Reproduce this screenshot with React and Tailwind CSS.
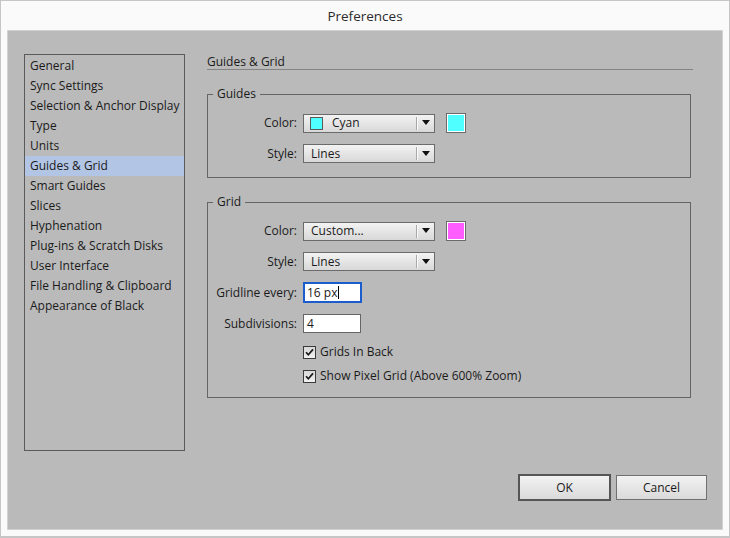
import React from "react";

const FONT = { fontFamily: '"Open Sans", "Noto Sans", sans-serif' };

const CATEGORIES = [
  "General",
  "Sync Settings",
  "Selection & Anchor Display",
  "Type",
  "Units",
  "Guides & Grid",
  "Smart Guides",
  "Slices",
  "Hyphenation",
  "Plug-ins & Scratch Disks",
  "User Interface",
  "File Handling & Clipboard",
  "Appearance of Black",
];

function Arrow() {
  return (
    <svg width="8" height="6" viewBox="0 0 8 6">
      <polygon points="0,0 8,0 4,5" fill="#111" />
    </svg>
  );
}

function Select({ label, swatch }) {
  return (
    <div className="flex h-[19px] w-[132px] items-stretch border border-[#6b6b6b] bg-gradient-to-b from-[#f3f3f3] to-[#d8d8d8]">
      <div className="flex flex-1 items-center pl-[6px]">
        {swatch && (
          <span
            className="mr-[9px] h-[13px] w-[13px] border border-[#5a5a5a]"
            style={{ backgroundColor: swatch }}
          />
        )}
        <span className={swatch ? "" : "pl-[1px]"}>{label}</span>
      </div>
      <div className="my-[2px] w-px bg-[#a8a8a8]" />
      <div className="my-[2px] w-px bg-[#fbfbfb]" />
      <div className="flex w-[16px] items-center justify-center pr-[1px]">
        <Arrow />
      </div>
    </div>
  );
}

function Swatch({ color }) {
  return (
    <div className="ml-[11px] h-[20px] w-[20px] border border-[#6b6b6b]">
      <div
        className="h-full w-full border border-white"
        style={{ backgroundColor: color }}
      />
    </div>
  );
}

function Row({ label, children, className = "" }) {
  return (
    <div className={"flex items-center " + className}>
      <div className="w-[90px] pr-[1px] text-right">{label}</div>
      <div className="ml-[5px] flex items-center">{children}</div>
    </div>
  );
}

function Check({ label, className = "" }) {
  return (
    <div className={"flex h-[16px] items-center pl-[95px] " + className}>
      <svg width="13" height="13" viewBox="0 0 13 13">
        <defs>
          <linearGradient id="cb" x1="0" y1="0" x2="0" y2="1">
            <stop offset="0" stopColor="#d6d6d6" />
            <stop offset="1" stopColor="#f2f2f2" />
          </linearGradient>
        </defs>
        <rect x="0.5" y="0.5" width="12" height="12" fill="url(#cb)" stroke="#3a3a3a" />
        <path d="M3 6.2 L5.3 8.8 L10 3.4" fill="none" stroke="#1a1a1a" strokeWidth="1.7" />
      </svg>
      <span className="ml-[4px]">{label}</span>
    </div>
  );
}

function Group({ title, children, className = "" }) {
  return (
    <div className={"mr-[2px] border border-[#656565] " + className}>
      <div className="ml-[5px] -mt-[9px] flex h-[16px] w-fit items-center bg-[#bababa] px-[4px] leading-[16px]">
        {title}
      </div>
      {children}
    </div>
  );
}

export default function App() {
  return (
    <div
      className="flex h-[538px] w-[730px] flex-col border-x border-t border-b-2 border-[#c6c6c6] bg-[#fafafa] px-[6px] pb-[6px] text-[12px] text-[#1a1a1a]"
      style={FONT}
    >
      <div className="flex h-[29px] items-center justify-center pt-[2px] text-[13.5px] text-[#2b2b2b]">
        Preferences
      </div>

      <div className="flex h-[500px] flex-col border border-[#d2d2d2] bg-[#bababa]">
        <div className="flex pt-[23px] pl-[16px]">
          {/* category list */}
          <div className="h-[397px] w-[161px] border border-[#5a5a5a] pt-px">
            {CATEGORIES.map((c) => (
              <div
                key={c}
                className={
                  "flex h-[20px] items-center pl-[5px] " +
                  (c === "Guides & Grid" ? "bg-[#b3c5e4]" : "")
                }
              >
                {c}
              </div>
            ))}
          </div>

          {/* settings pane */}
          <div className="ml-[22px] w-[486px]">
            <div className="h-[16px] border-b border-[#858585] leading-[15px]">
              Guides &amp; Grid
            </div>

            <Group title="Guides" className="mt-[24px] pb-[14px]">
              <Row label="Color:" className="mt-[11px]">
                <Select label="Cyan" swatch="#4ffefe" />
                <Swatch color="#4ffefe" />
              </Row>
              <Row label="Style:" className="mt-[11px]">
                <Select label="Lines" />
              </Row>
            </Group>

            <Group title="Grid" className="mt-[24px] pb-[13px]">
              <Row label="Color:" className="mt-[11px]">
                <Select label="Custom..." />
                <Swatch color="#ff5cff" />
              </Row>
              <Row label="Style:" className="mt-[11px]">
                <Select label="Lines" />
              </Row>
              <Row label="Gridline every:" className="mt-[11px]">
                <div className="flex h-[21px] w-[59px] items-center border-2 border-[#1b5dcc] bg-white pl-[2px]">
                  <span>16 px</span>
                  <span className="ml-px h-[13px] w-px bg-black" />
                </div>
              </Row>
              <Row label="Subdivisions:" className="mt-[11px]">
                <div className="flex h-[19px] w-[58px] items-center border border-[#666] bg-white pl-[3px]">
                  4
                </div>
              </Row>
              <Check label="Grids In Back" className="mt-[11px]" />
              <Check label="Show Pixel Grid (Above 600% Zoom)" className="mt-[8px]" />
            </Group>
          </div>
        </div>

        <div className="mt-[23px] flex items-center justify-end pr-[15px]">
          <button className="flex h-[27px] w-[93px] items-center justify-center border-2 border-[#555] bg-gradient-to-b from-[#f2f2f2] to-[#dadada]">
            OK
          </button>
          <button className="ml-[5px] flex h-[25px] w-[91px] items-center justify-center border border-[#707070] bg-gradient-to-b from-[#f2f2f2] to-[#dadada]">
            Cancel
          </button>
        </div>
      </div>
    </div>
  );
}
